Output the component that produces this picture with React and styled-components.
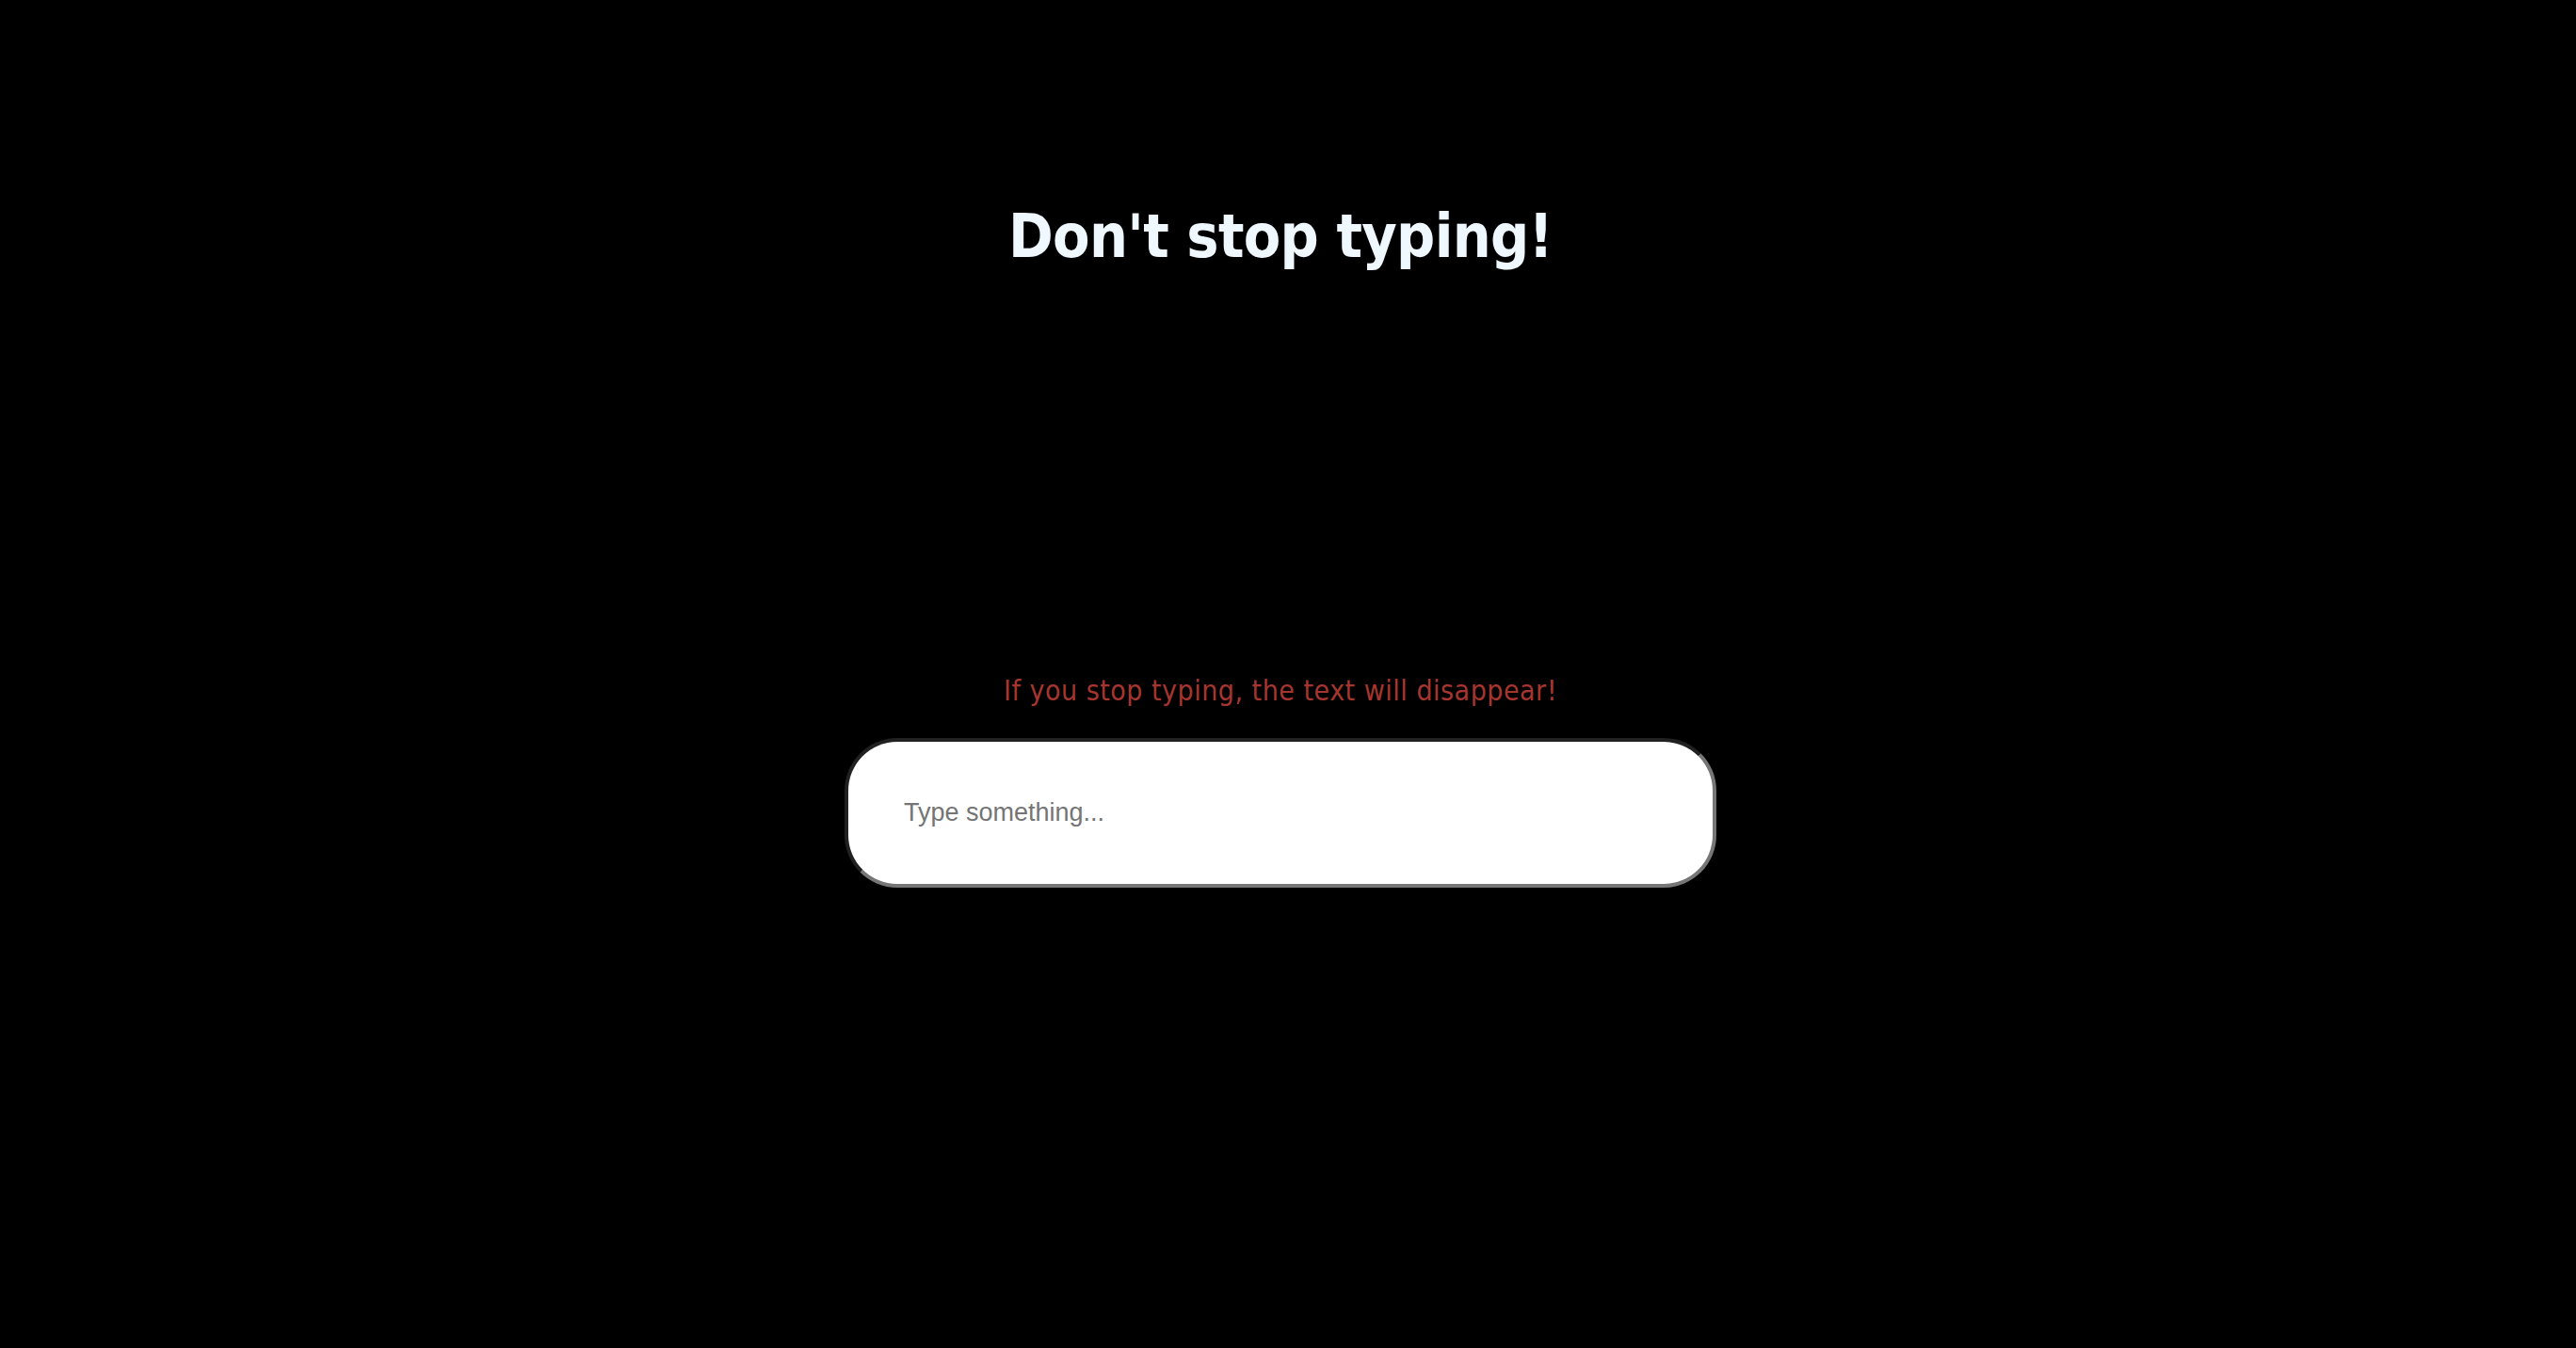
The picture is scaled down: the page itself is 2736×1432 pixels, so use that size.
import React from "react";
import styled, { createGlobalStyle } from "styled-components";

const Global = createGlobalStyle`
  html, body { margin: 0; padding: 0; background: #000; }
  body { font-family: "DejaVu Sans Condensed", "DejaVu Sans", sans-serif; }
`;

const Page = styled.main`
  box-sizing: border-box;
  min-height: 1432px;
  padding-right: 16px;
  display: flex;
  flex-direction: column;
  align-items: center;
  background: #000;
`;

const Title = styled.h1`
  margin: 219px 0 0;
  font-family: "DejaVu Sans Condensed", "DejaVu Sans", sans-serif;
  font-weight: bold;
  font-size: 64px;
  line-height: 64px;
  letter-spacing: -0.7px;
  color: aliceblue;
`;

const Warning = styled.p`
  margin: 436px 0 0;
  font-family: "DejaVu Sans Condensed", "DejaVu Sans", sans-serif;
  font-size: 30px;
  line-height: 30px;
  letter-spacing: 0.5px;
  color: #a5362f;
`;

const Field = styled.input`
  box-sizing: border-box;
  margin-top: 35px;
  width: 926px;
  height: 159px;
  padding: 0 0 0 59px;
  border: 4px inset rgb(118, 118, 118);
  border-radius: 56px;
  background: #fff;
  font-family: "Liberation Sans", Arial, sans-serif;
  font-size: 27px;
  color: #000;
  outline: none;
  &::placeholder { color: #757575; }
`;

export default function App() {
  return (
    <>
      <Global />
      <Page>
        <Title>Don't stop typing!</Title>
        <Warning>If you stop typing, the text will disappear!</Warning>
        <Field type="text" placeholder="Type something..." />
      </Page>
    </>
  );
}
